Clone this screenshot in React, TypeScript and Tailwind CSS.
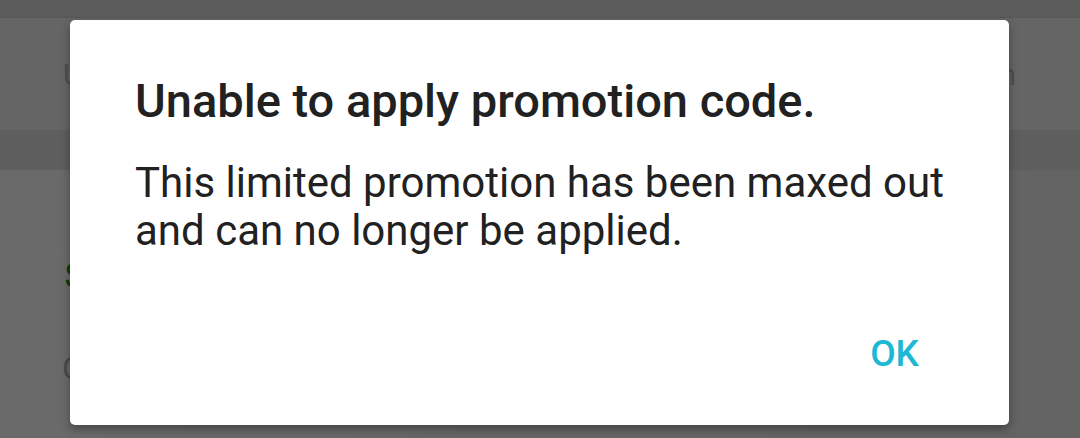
const App = () => {
  return (
    <div
      className="relative h-[438px] w-[1080px] overflow-hidden bg-[#666666]"
      style={{ fontFamily: "Roboto, 'Noto Sans', sans-serif" }}
    >
      {/* dimmed app behind the dialog */}
      <div className="flex h-full flex-col">
        <div className="h-[17px] bg-[#5c5c5c]" />
        <div className="h-px bg-[#575757]" />
        <div className="flex h-[112px] items-center justify-between bg-[#656565] pl-[63px] pr-[64px] text-[30px] text-[#4f4f4f]">
          <span>U</span>
          <span>n</span>
        </div>
        <div className="h-[40px] bg-[#5e5e5e]" />
        <div className="flex flex-1 flex-col bg-gradient-to-r from-[#6a6a6a] to-[#636363] pl-[64px] pt-[88px]">
          <span className="text-[34px] leading-none text-[#0b3b0b]">$</span>
          <span className="ml-[-2px] mt-[60px] text-[32px] leading-none text-[#4a4a4a]">C</span>
        </div>
      </div>

      {/* dialog */}
      <div className="absolute left-[70px] top-[20px] flex h-[405px] w-[939px] flex-col rounded-[5px] bg-white pl-[65px] pr-[64px] shadow-[0_4px_10px_rgba(0,0,0,0.35)]">
        <h1 className="mt-[53px] text-[47px] font-medium leading-[56px] text-[#212121]">
          Unable to apply promotion code.
        </h1>
        <p className="mt-[30px] text-[42px] leading-[48px] text-[#212121]">
          This limited promotion has been maxed out and can no longer be applied.
        </p>
        <div className="mt-auto mb-[53px] flex justify-end pr-[26px]">
          <button className="text-[37px] font-medium leading-none text-[#1fb8d4]">
            OK
          </button>
        </div>
      </div>
    </div>
  );
};

export default App;
